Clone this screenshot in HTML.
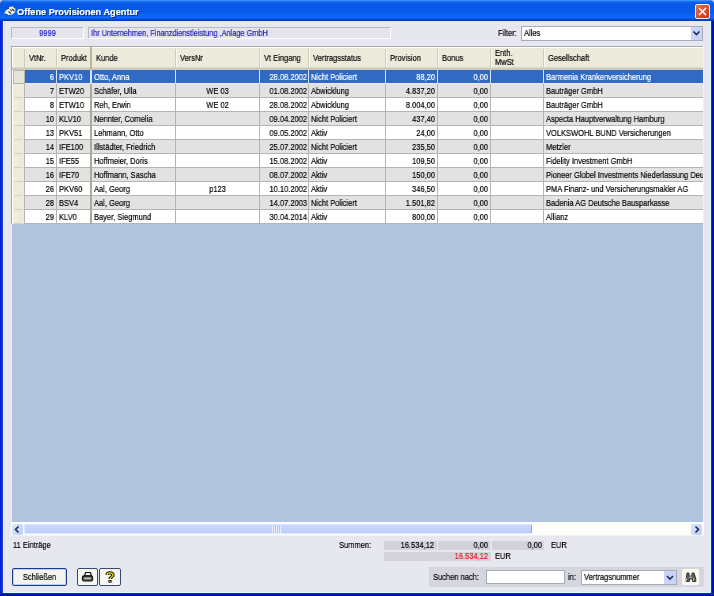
<!DOCTYPE html>
<html><head><meta charset="utf-8"><style>
*{box-sizing:border-box}
html,body{margin:0;padding:0;width:714px;height:596px;overflow:hidden;background:#b4c4ec}
body{position:relative;font-family:"Liberation Sans",sans-serif;font-size:9.5px;color:#000}
.a{position:absolute}
.t{position:absolute;white-space:nowrap;line-height:10px;transform:scaleX(0.79);will-change:transform;-webkit-text-stroke-width:.2px}
svg{position:absolute;overflow:visible}
</style></head><body>

<div class="a" style="left:0px;top:0px;width:714px;height:596px;border-radius:5px 5px 0 0;background:linear-gradient(90deg,#0020d8 0,#0a2ddb 2px,#1d3dcc 2px,#1d3dcc 3px,#0a2ddb 3px,#0a2ddb 711px,#3050c0 711px,#0010a0 712px)"></div>
<div class="a" style="left:0px;top:593px;width:714px;height:3px;background:linear-gradient(180deg,#1a3aa8 0,#0828a8 1px,#001090 2px)"></div>
<div class="a" style="left:0px;top:0px;width:714px;height:21px;border-radius:5px 5px 0 0;background:linear-gradient(180deg,#4b9cff 0,#2b80f6 1px,#0c62ec 2px,#0858e8 4px,#0858ea 11px,#0a64f4 15px,#0a6afc 18px,#0454dc 19px,#003cbc 20px,#003cbc 21px)"></div>
<div class="a" style="left:3px;top:21px;width:708px;height:572px;background:#e7e7f0;border-left:1px solid #dff8ff;border-right:1px solid #e0fcff;border-bottom:1px solid #e0fcff"></div>
<div class="t" style="left:17px;top:6px;color:#fff;font-weight:bold;font-size:9.2px;line-height:12px;transform:none;text-shadow:1px 1px 0 #0a1e8c">Offene Provisionen Agentur</div>
<svg style="left:3px;top:5px" width="14" height="11"><path d="M1.5 7.5L4.5 3.5Q7 1 10 1.5L12.5 4L12 7.5L9 9.5L5 10L2 9.5Z" fill="#eef2ea"/><path d="M2 9L4.5 10M5.5 6.5L8 8.5M9 4L11.5 6M4 4L6 3" stroke="#1a2860" stroke-width="1.1"/><path d="M7 4.5L9 6" stroke="#705838" stroke-width="1.2"/><path d="M10.5 2L12 3" stroke="#405838" stroke-width="1"/></svg>
<div class="a" style="left:695px;top:4px;width:15px;height:15px;border:1px solid #f4f0f8;border-radius:2px;background:linear-gradient(135deg,#e8704a 0,#d9502a 50%,#c43a18 100%)"></div>
<svg style="left:695px;top:4px" width="15" height="15"><path d="M4 4L11 11M11 4L4 11" stroke="#fff" stroke-width="1.7"/></svg>
<div class="a" style="left:11px;top:27px;width:73px;height:12px;background:#e5e4ec;border-top:1px solid #b9b8bf;border-left:1px solid #b9b8bf;border-bottom:1px solid #fff;border-right:1px solid #fff"></div>
<div class="t" style="left:11px;top:27.5px;width:73px;text-align:center;transform-origin:50% 50%;color:#1c1cc0;">9999</div>
<div class="a" style="left:88px;top:27px;width:303px;height:12px;background:#e5e4ec;border-top:1px solid #b9b8bf;border-left:1px solid #b9b8bf;border-bottom:1px solid #fff;border-right:1px solid #fff"></div>
<div class="t" style="left:91px;top:27.5px;transform-origin:0 50%;color:#1c1cc0;transform:scaleX(0.775)">Ihr Unternehmen, Finanzdienstleistung ,Anlage GmbH</div>
<div class="t" style="left:498px;top:28px;transform-origin:0 50%;">Filter:</div>
<div class="a" style="left:521px;top:26px;width:182px;height:15px;background:#fff;border:1px solid #a5acb5"></div>
<div class="t" style="left:524px;top:28px;transform-origin:0 50%;">Alles</div>
<div class="a" style="left:691px;top:27px;width:11px;height:13px;background:#c8d4f8;border-radius:1px"></div>
<svg style="left:691px;top:27px" width="11" height="13"><path d="M2.5 4.5L5.5 7.5L8.5 4.5" stroke="#1c2a5a" stroke-width="1.6" fill="none"/></svg>
<div class="a" style="left:11px;top:46px;width:693px;height:490px;background:#b0c4de;overflow:hidden">
<div class="a" style="left:0px;top:0px;width:1px;height:490px;background:#e8ecf8"></div>
<div class="a" style="left:0px;top:0px;width:692px;height:24px;background:linear-gradient(180deg,#a8a8a8 0,#a8a8a8 1px,#ffffff 1px,#ffffff 2px,#ebeadb 2px,#ebeadb 21px,#e2dec7 21px,#d6d2c2 22px,#cbc7b8 23px)"></div>
<div class="a" style="left:0px;top:0px;width:1px;height:178px;background:#a8a8a8"></div>
<div class="a" style="left:1px;top:1px;width:1px;height:20px;background:#ffffff"></div>
<div class="a" style="left:13px;top:3px;width:1px;height:18px;background:#cfcdbd"></div>
<div class="a" style="left:45px;top:3px;width:1px;height:18px;background:#cfcdbd"></div>
<div class="a" style="left:46px;top:3px;width:1px;height:18px;background:#f8f8f2"></div>
<div class="t" style="left:18px;top:6.5px;transform-origin:0 50%;">VtNr.</div>
<div class="a" style="left:79px;top:1px;width:2px;height:23px;background:#c0b49c"></div>
<div class="t" style="left:50px;top:6.5px;transform-origin:0 50%;">Produkt</div>
<div class="a" style="left:164px;top:3px;width:1px;height:18px;background:#cfcdbd"></div>
<div class="a" style="left:165px;top:3px;width:1px;height:18px;background:#f8f8f2"></div>
<div class="t" style="left:85px;top:6.5px;transform-origin:0 50%;">Kunde</div>
<div class="a" style="left:248px;top:3px;width:1px;height:18px;background:#cfcdbd"></div>
<div class="a" style="left:249px;top:3px;width:1px;height:18px;background:#f8f8f2"></div>
<div class="t" style="left:169px;top:6.5px;transform-origin:0 50%;">VersNr</div>
<div class="a" style="left:297px;top:3px;width:1px;height:18px;background:#cfcdbd"></div>
<div class="a" style="left:298px;top:3px;width:1px;height:18px;background:#f8f8f2"></div>
<div class="t" style="left:253px;top:6.5px;transform-origin:0 50%;">Vt Eingang</div>
<div class="a" style="left:374px;top:3px;width:1px;height:18px;background:#cfcdbd"></div>
<div class="a" style="left:375px;top:3px;width:1px;height:18px;background:#f8f8f2"></div>
<div class="t" style="left:302px;top:6.5px;transform-origin:0 50%;">Vertragsstatus</div>
<div class="a" style="left:426px;top:3px;width:1px;height:18px;background:#cfcdbd"></div>
<div class="a" style="left:427px;top:3px;width:1px;height:18px;background:#f8f8f2"></div>
<div class="t" style="left:379px;top:6.5px;transform-origin:0 50%;">Provision</div>
<div class="a" style="left:479px;top:3px;width:1px;height:18px;background:#cfcdbd"></div>
<div class="a" style="left:480px;top:3px;width:1px;height:18px;background:#f8f8f2"></div>
<div class="t" style="left:431px;top:6.5px;transform-origin:0 50%;">Bonus</div>
<div class="a" style="left:532px;top:3px;width:1px;height:18px;background:#cfcdbd"></div>
<div class="a" style="left:533px;top:3px;width:1px;height:18px;background:#f8f8f2"></div>
<div class="t" style="left:484px;top:3px;transform-origin:0 50%;line-height:8px">Enth.</div>
<div class="t" style="left:484px;top:12px;transform-origin:0 50%;line-height:8px">MwSt</div>
<div class="t" style="left:537px;top:6.5px;transform-origin:0 50%;">Gesellschaft</div>
<div class="a" style="left:1px;top:24px;width:13px;height:14px;background:#ecebdd"></div>
<div class="a" style="left:2px;top:24px;width:12px;height:14px;background:#e4e4da;border:1px solid #b8b6a6;border-right:none"></div>
<div class="a" style="left:1px;top:24px;width:1px;height:14px;background:#ffffff"></div>
<div class="a" style="left:13px;top:24px;width:1px;height:14px;background:#b8b6a8"></div>
<div class="a" style="left:14px;top:24px;width:735px;height:14px;background:#316ac5"></div>
<div class="a" style="left:14px;top:37px;width:735px;height:1px;background:#e8eefa"></div>
<div class="a" style="left:45px;top:24px;width:1px;height:14px;background:#d8e4f8"></div>
<div class="t" style="left:14px;top:25.5px;width:29px;text-align:right;transform-origin:100% 50%;color:#fff;">6</div>
<div class="a" style="left:79px;top:24px;width:2px;height:14px;background:#d8e4f8"></div>
<div class="t" style="left:48px;top:25.5px;transform-origin:0 50%;color:#fff;">PKV10</div>
<div class="a" style="left:164px;top:24px;width:1px;height:14px;background:#d8e4f8"></div>
<div class="t" style="left:83px;top:25.5px;transform-origin:0 50%;color:#fff;">Otto, Anna</div>
<div class="a" style="left:248px;top:24px;width:1px;height:14px;background:#d8e4f8"></div>
<div class="a" style="left:297px;top:24px;width:1px;height:14px;background:#d8e4f8"></div>
<div class="t" style="left:249px;top:25.5px;width:45px;text-align:right;transform-origin:100% 50%;color:#fff;">28.08.2002</div>
<div class="a" style="left:374px;top:24px;width:1px;height:14px;background:#d8e4f8"></div>
<div class="t" style="left:300px;top:25.5px;transform-origin:0 50%;color:#fff;">Nicht Policiert</div>
<div class="a" style="left:426px;top:24px;width:1px;height:14px;background:#d8e4f8"></div>
<div class="t" style="left:375px;top:25.5px;width:49px;text-align:right;transform-origin:100% 50%;color:#fff;">88,20</div>
<div class="a" style="left:479px;top:24px;width:1px;height:14px;background:#d8e4f8"></div>
<div class="t" style="left:427px;top:25.5px;width:50px;text-align:right;transform-origin:100% 50%;color:#fff;">0,00</div>
<div class="a" style="left:532px;top:24px;width:1px;height:14px;background:#d8e4f8"></div>
<div class="t" style="left:535px;top:25.5px;transform-origin:0 50%;color:#fff;">Barmenia Krankenversicherung</div>
<div class="a" style="left:1px;top:38px;width:13px;height:14px;background:#edecdd"></div>
<div class="a" style="left:3px;top:51px;width:9px;height:1px;background:#d2d0c0"></div>
<div class="a" style="left:1px;top:38px;width:1px;height:14px;background:#ffffff"></div>
<div class="a" style="left:13px;top:38px;width:1px;height:14px;background:#b8b6a8"></div>
<div class="a" style="left:14px;top:38px;width:735px;height:14px;background:#e2e2e2"></div>
<div class="a" style="left:14px;top:51px;width:735px;height:1px;background:#b4b4b4"></div>
<div class="a" style="left:45px;top:38px;width:1px;height:14px;background:#b4b4b4"></div>
<div class="t" style="left:14px;top:39.5px;width:29px;text-align:right;transform-origin:100% 50%;">7</div>
<div class="a" style="left:79px;top:38px;width:2px;height:14px;background:#b0a898"></div>
<div class="t" style="left:48px;top:39.5px;transform-origin:0 50%;">ETW20</div>
<div class="a" style="left:164px;top:38px;width:1px;height:14px;background:#b4b4b4"></div>
<div class="t" style="left:83px;top:39.5px;transform-origin:0 50%;">Schäfer, Ulla</div>
<div class="a" style="left:248px;top:38px;width:1px;height:14px;background:#b4b4b4"></div>
<div class="t" style="left:165px;top:39.5px;width:83px;text-align:center;transform-origin:50% 50%;">WE 03</div>
<div class="a" style="left:297px;top:38px;width:1px;height:14px;background:#b4b4b4"></div>
<div class="t" style="left:249px;top:39.5px;width:45px;text-align:right;transform-origin:100% 50%;">01.08.2002</div>
<div class="a" style="left:374px;top:38px;width:1px;height:14px;background:#b4b4b4"></div>
<div class="t" style="left:300px;top:39.5px;transform-origin:0 50%;">Abwicklung</div>
<div class="a" style="left:426px;top:38px;width:1px;height:14px;background:#b4b4b4"></div>
<div class="t" style="left:375px;top:39.5px;width:49px;text-align:right;transform-origin:100% 50%;">4.837,20</div>
<div class="a" style="left:479px;top:38px;width:1px;height:14px;background:#b4b4b4"></div>
<div class="t" style="left:427px;top:39.5px;width:50px;text-align:right;transform-origin:100% 50%;">0,00</div>
<div class="a" style="left:532px;top:38px;width:1px;height:14px;background:#b4b4b4"></div>
<div class="t" style="left:535px;top:39.5px;transform-origin:0 50%;">Bauträger GmbH</div>
<div class="a" style="left:1px;top:52px;width:13px;height:14px;background:#edecdd"></div>
<div class="a" style="left:3px;top:65px;width:9px;height:1px;background:#d2d0c0"></div>
<div class="a" style="left:1px;top:52px;width:1px;height:14px;background:#ffffff"></div>
<div class="a" style="left:13px;top:52px;width:1px;height:14px;background:#b8b6a8"></div>
<div class="a" style="left:14px;top:52px;width:735px;height:14px;background:#ffffff"></div>
<div class="a" style="left:14px;top:65px;width:735px;height:1px;background:#b4b4b4"></div>
<div class="a" style="left:45px;top:52px;width:1px;height:14px;background:#b4b4b4"></div>
<div class="t" style="left:14px;top:53.5px;width:29px;text-align:right;transform-origin:100% 50%;">8</div>
<div class="a" style="left:79px;top:52px;width:2px;height:14px;background:#b0a898"></div>
<div class="t" style="left:48px;top:53.5px;transform-origin:0 50%;">ETW10</div>
<div class="a" style="left:164px;top:52px;width:1px;height:14px;background:#b4b4b4"></div>
<div class="t" style="left:83px;top:53.5px;transform-origin:0 50%;">Reh, Erwin</div>
<div class="a" style="left:248px;top:52px;width:1px;height:14px;background:#b4b4b4"></div>
<div class="t" style="left:165px;top:53.5px;width:83px;text-align:center;transform-origin:50% 50%;">WE 02</div>
<div class="a" style="left:297px;top:52px;width:1px;height:14px;background:#b4b4b4"></div>
<div class="t" style="left:249px;top:53.5px;width:45px;text-align:right;transform-origin:100% 50%;">28.08.2002</div>
<div class="a" style="left:374px;top:52px;width:1px;height:14px;background:#b4b4b4"></div>
<div class="t" style="left:300px;top:53.5px;transform-origin:0 50%;">Abwicklung</div>
<div class="a" style="left:426px;top:52px;width:1px;height:14px;background:#b4b4b4"></div>
<div class="t" style="left:375px;top:53.5px;width:49px;text-align:right;transform-origin:100% 50%;">8.004,00</div>
<div class="a" style="left:479px;top:52px;width:1px;height:14px;background:#b4b4b4"></div>
<div class="t" style="left:427px;top:53.5px;width:50px;text-align:right;transform-origin:100% 50%;">0,00</div>
<div class="a" style="left:532px;top:52px;width:1px;height:14px;background:#b4b4b4"></div>
<div class="t" style="left:535px;top:53.5px;transform-origin:0 50%;">Bauträger GmbH</div>
<div class="a" style="left:1px;top:66px;width:13px;height:14px;background:#edecdd"></div>
<div class="a" style="left:3px;top:79px;width:9px;height:1px;background:#d2d0c0"></div>
<div class="a" style="left:1px;top:66px;width:1px;height:14px;background:#ffffff"></div>
<div class="a" style="left:13px;top:66px;width:1px;height:14px;background:#b8b6a8"></div>
<div class="a" style="left:14px;top:66px;width:735px;height:14px;background:#e2e2e2"></div>
<div class="a" style="left:14px;top:79px;width:735px;height:1px;background:#b4b4b4"></div>
<div class="a" style="left:45px;top:66px;width:1px;height:14px;background:#b4b4b4"></div>
<div class="t" style="left:14px;top:67.5px;width:29px;text-align:right;transform-origin:100% 50%;">10</div>
<div class="a" style="left:79px;top:66px;width:2px;height:14px;background:#b0a898"></div>
<div class="t" style="left:48px;top:67.5px;transform-origin:0 50%;">KLV10</div>
<div class="a" style="left:164px;top:66px;width:1px;height:14px;background:#b4b4b4"></div>
<div class="t" style="left:83px;top:67.5px;transform-origin:0 50%;">Nennter, Cornelia</div>
<div class="a" style="left:248px;top:66px;width:1px;height:14px;background:#b4b4b4"></div>
<div class="a" style="left:297px;top:66px;width:1px;height:14px;background:#b4b4b4"></div>
<div class="t" style="left:249px;top:67.5px;width:45px;text-align:right;transform-origin:100% 50%;">09.04.2002</div>
<div class="a" style="left:374px;top:66px;width:1px;height:14px;background:#b4b4b4"></div>
<div class="t" style="left:300px;top:67.5px;transform-origin:0 50%;">Nicht Policiert</div>
<div class="a" style="left:426px;top:66px;width:1px;height:14px;background:#b4b4b4"></div>
<div class="t" style="left:375px;top:67.5px;width:49px;text-align:right;transform-origin:100% 50%;">437,40</div>
<div class="a" style="left:479px;top:66px;width:1px;height:14px;background:#b4b4b4"></div>
<div class="t" style="left:427px;top:67.5px;width:50px;text-align:right;transform-origin:100% 50%;">0,00</div>
<div class="a" style="left:532px;top:66px;width:1px;height:14px;background:#b4b4b4"></div>
<div class="t" style="left:535px;top:67.5px;transform-origin:0 50%;">Aspecta Hauptverwaltung Hamburg</div>
<div class="a" style="left:1px;top:80px;width:13px;height:14px;background:#edecdd"></div>
<div class="a" style="left:3px;top:93px;width:9px;height:1px;background:#d2d0c0"></div>
<div class="a" style="left:1px;top:80px;width:1px;height:14px;background:#ffffff"></div>
<div class="a" style="left:13px;top:80px;width:1px;height:14px;background:#b8b6a8"></div>
<div class="a" style="left:14px;top:80px;width:735px;height:14px;background:#ffffff"></div>
<div class="a" style="left:14px;top:93px;width:735px;height:1px;background:#b4b4b4"></div>
<div class="a" style="left:45px;top:80px;width:1px;height:14px;background:#b4b4b4"></div>
<div class="t" style="left:14px;top:81.5px;width:29px;text-align:right;transform-origin:100% 50%;">13</div>
<div class="a" style="left:79px;top:80px;width:2px;height:14px;background:#b0a898"></div>
<div class="t" style="left:48px;top:81.5px;transform-origin:0 50%;">PKV51</div>
<div class="a" style="left:164px;top:80px;width:1px;height:14px;background:#b4b4b4"></div>
<div class="t" style="left:83px;top:81.5px;transform-origin:0 50%;">Lehmann, Otto</div>
<div class="a" style="left:248px;top:80px;width:1px;height:14px;background:#b4b4b4"></div>
<div class="a" style="left:297px;top:80px;width:1px;height:14px;background:#b4b4b4"></div>
<div class="t" style="left:249px;top:81.5px;width:45px;text-align:right;transform-origin:100% 50%;">09.05.2002</div>
<div class="a" style="left:374px;top:80px;width:1px;height:14px;background:#b4b4b4"></div>
<div class="t" style="left:300px;top:81.5px;transform-origin:0 50%;">Aktiv</div>
<div class="a" style="left:426px;top:80px;width:1px;height:14px;background:#b4b4b4"></div>
<div class="t" style="left:375px;top:81.5px;width:49px;text-align:right;transform-origin:100% 50%;">24,00</div>
<div class="a" style="left:479px;top:80px;width:1px;height:14px;background:#b4b4b4"></div>
<div class="t" style="left:427px;top:81.5px;width:50px;text-align:right;transform-origin:100% 50%;">0,00</div>
<div class="a" style="left:532px;top:80px;width:1px;height:14px;background:#b4b4b4"></div>
<div class="t" style="left:535px;top:81.5px;transform-origin:0 50%;">VOLKSWOHL BUND Versicherungen</div>
<div class="a" style="left:1px;top:94px;width:13px;height:14px;background:#edecdd"></div>
<div class="a" style="left:3px;top:107px;width:9px;height:1px;background:#d2d0c0"></div>
<div class="a" style="left:1px;top:94px;width:1px;height:14px;background:#ffffff"></div>
<div class="a" style="left:13px;top:94px;width:1px;height:14px;background:#b8b6a8"></div>
<div class="a" style="left:14px;top:94px;width:735px;height:14px;background:#e2e2e2"></div>
<div class="a" style="left:14px;top:107px;width:735px;height:1px;background:#b4b4b4"></div>
<div class="a" style="left:45px;top:94px;width:1px;height:14px;background:#b4b4b4"></div>
<div class="t" style="left:14px;top:95.5px;width:29px;text-align:right;transform-origin:100% 50%;">14</div>
<div class="a" style="left:79px;top:94px;width:2px;height:14px;background:#b0a898"></div>
<div class="t" style="left:48px;top:95.5px;transform-origin:0 50%;">IFE100</div>
<div class="a" style="left:164px;top:94px;width:1px;height:14px;background:#b4b4b4"></div>
<div class="t" style="left:83px;top:95.5px;transform-origin:0 50%;">Illstädter, Friedrich</div>
<div class="a" style="left:248px;top:94px;width:1px;height:14px;background:#b4b4b4"></div>
<div class="a" style="left:297px;top:94px;width:1px;height:14px;background:#b4b4b4"></div>
<div class="t" style="left:249px;top:95.5px;width:45px;text-align:right;transform-origin:100% 50%;">25.07.2002</div>
<div class="a" style="left:374px;top:94px;width:1px;height:14px;background:#b4b4b4"></div>
<div class="t" style="left:300px;top:95.5px;transform-origin:0 50%;">Nicht Policiert</div>
<div class="a" style="left:426px;top:94px;width:1px;height:14px;background:#b4b4b4"></div>
<div class="t" style="left:375px;top:95.5px;width:49px;text-align:right;transform-origin:100% 50%;">235,50</div>
<div class="a" style="left:479px;top:94px;width:1px;height:14px;background:#b4b4b4"></div>
<div class="t" style="left:427px;top:95.5px;width:50px;text-align:right;transform-origin:100% 50%;">0,00</div>
<div class="a" style="left:532px;top:94px;width:1px;height:14px;background:#b4b4b4"></div>
<div class="t" style="left:535px;top:95.5px;transform-origin:0 50%;">Metzler</div>
<div class="a" style="left:1px;top:108px;width:13px;height:14px;background:#edecdd"></div>
<div class="a" style="left:3px;top:121px;width:9px;height:1px;background:#d2d0c0"></div>
<div class="a" style="left:1px;top:108px;width:1px;height:14px;background:#ffffff"></div>
<div class="a" style="left:13px;top:108px;width:1px;height:14px;background:#b8b6a8"></div>
<div class="a" style="left:14px;top:108px;width:735px;height:14px;background:#ffffff"></div>
<div class="a" style="left:14px;top:121px;width:735px;height:1px;background:#b4b4b4"></div>
<div class="a" style="left:45px;top:108px;width:1px;height:14px;background:#b4b4b4"></div>
<div class="t" style="left:14px;top:109.5px;width:29px;text-align:right;transform-origin:100% 50%;">15</div>
<div class="a" style="left:79px;top:108px;width:2px;height:14px;background:#b0a898"></div>
<div class="t" style="left:48px;top:109.5px;transform-origin:0 50%;">IFE55</div>
<div class="a" style="left:164px;top:108px;width:1px;height:14px;background:#b4b4b4"></div>
<div class="t" style="left:83px;top:109.5px;transform-origin:0 50%;">Hoffmeier, Doris</div>
<div class="a" style="left:248px;top:108px;width:1px;height:14px;background:#b4b4b4"></div>
<div class="a" style="left:297px;top:108px;width:1px;height:14px;background:#b4b4b4"></div>
<div class="t" style="left:249px;top:109.5px;width:45px;text-align:right;transform-origin:100% 50%;">15.08.2002</div>
<div class="a" style="left:374px;top:108px;width:1px;height:14px;background:#b4b4b4"></div>
<div class="t" style="left:300px;top:109.5px;transform-origin:0 50%;">Aktiv</div>
<div class="a" style="left:426px;top:108px;width:1px;height:14px;background:#b4b4b4"></div>
<div class="t" style="left:375px;top:109.5px;width:49px;text-align:right;transform-origin:100% 50%;">109,50</div>
<div class="a" style="left:479px;top:108px;width:1px;height:14px;background:#b4b4b4"></div>
<div class="t" style="left:427px;top:109.5px;width:50px;text-align:right;transform-origin:100% 50%;">0,00</div>
<div class="a" style="left:532px;top:108px;width:1px;height:14px;background:#b4b4b4"></div>
<div class="t" style="left:535px;top:109.5px;transform-origin:0 50%;">Fidelity Investment GmbH</div>
<div class="a" style="left:1px;top:122px;width:13px;height:14px;background:#edecdd"></div>
<div class="a" style="left:3px;top:135px;width:9px;height:1px;background:#d2d0c0"></div>
<div class="a" style="left:1px;top:122px;width:1px;height:14px;background:#ffffff"></div>
<div class="a" style="left:13px;top:122px;width:1px;height:14px;background:#b8b6a8"></div>
<div class="a" style="left:14px;top:122px;width:735px;height:14px;background:#e2e2e2"></div>
<div class="a" style="left:14px;top:135px;width:735px;height:1px;background:#b4b4b4"></div>
<div class="a" style="left:45px;top:122px;width:1px;height:14px;background:#b4b4b4"></div>
<div class="t" style="left:14px;top:123.5px;width:29px;text-align:right;transform-origin:100% 50%;">16</div>
<div class="a" style="left:79px;top:122px;width:2px;height:14px;background:#b0a898"></div>
<div class="t" style="left:48px;top:123.5px;transform-origin:0 50%;">IFE70</div>
<div class="a" style="left:164px;top:122px;width:1px;height:14px;background:#b4b4b4"></div>
<div class="t" style="left:83px;top:123.5px;transform-origin:0 50%;">Hoffmann, Sascha</div>
<div class="a" style="left:248px;top:122px;width:1px;height:14px;background:#b4b4b4"></div>
<div class="a" style="left:297px;top:122px;width:1px;height:14px;background:#b4b4b4"></div>
<div class="t" style="left:249px;top:123.5px;width:45px;text-align:right;transform-origin:100% 50%;">08.07.2002</div>
<div class="a" style="left:374px;top:122px;width:1px;height:14px;background:#b4b4b4"></div>
<div class="t" style="left:300px;top:123.5px;transform-origin:0 50%;">Aktiv</div>
<div class="a" style="left:426px;top:122px;width:1px;height:14px;background:#b4b4b4"></div>
<div class="t" style="left:375px;top:123.5px;width:49px;text-align:right;transform-origin:100% 50%;">150,00</div>
<div class="a" style="left:479px;top:122px;width:1px;height:14px;background:#b4b4b4"></div>
<div class="t" style="left:427px;top:123.5px;width:50px;text-align:right;transform-origin:100% 50%;">0,00</div>
<div class="a" style="left:532px;top:122px;width:1px;height:14px;background:#b4b4b4"></div>
<div class="t" style="left:535px;top:123.5px;transform-origin:0 50%;">Pioneer Globel Investments Niederlassung Deutschland</div>
<div class="a" style="left:1px;top:136px;width:13px;height:14px;background:#edecdd"></div>
<div class="a" style="left:3px;top:149px;width:9px;height:1px;background:#d2d0c0"></div>
<div class="a" style="left:1px;top:136px;width:1px;height:14px;background:#ffffff"></div>
<div class="a" style="left:13px;top:136px;width:1px;height:14px;background:#b8b6a8"></div>
<div class="a" style="left:14px;top:136px;width:735px;height:14px;background:#ffffff"></div>
<div class="a" style="left:14px;top:149px;width:735px;height:1px;background:#b4b4b4"></div>
<div class="a" style="left:45px;top:136px;width:1px;height:14px;background:#b4b4b4"></div>
<div class="t" style="left:14px;top:137.5px;width:29px;text-align:right;transform-origin:100% 50%;">26</div>
<div class="a" style="left:79px;top:136px;width:2px;height:14px;background:#b0a898"></div>
<div class="t" style="left:48px;top:137.5px;transform-origin:0 50%;">PKV60</div>
<div class="a" style="left:164px;top:136px;width:1px;height:14px;background:#b4b4b4"></div>
<div class="t" style="left:83px;top:137.5px;transform-origin:0 50%;">Aal, Georg</div>
<div class="a" style="left:248px;top:136px;width:1px;height:14px;background:#b4b4b4"></div>
<div class="t" style="left:165px;top:137.5px;width:83px;text-align:center;transform-origin:50% 50%;">p123</div>
<div class="a" style="left:297px;top:136px;width:1px;height:14px;background:#b4b4b4"></div>
<div class="t" style="left:249px;top:137.5px;width:45px;text-align:right;transform-origin:100% 50%;">10.10.2002</div>
<div class="a" style="left:374px;top:136px;width:1px;height:14px;background:#b4b4b4"></div>
<div class="t" style="left:300px;top:137.5px;transform-origin:0 50%;">Aktiv</div>
<div class="a" style="left:426px;top:136px;width:1px;height:14px;background:#b4b4b4"></div>
<div class="t" style="left:375px;top:137.5px;width:49px;text-align:right;transform-origin:100% 50%;">346,50</div>
<div class="a" style="left:479px;top:136px;width:1px;height:14px;background:#b4b4b4"></div>
<div class="t" style="left:427px;top:137.5px;width:50px;text-align:right;transform-origin:100% 50%;">0,00</div>
<div class="a" style="left:532px;top:136px;width:1px;height:14px;background:#b4b4b4"></div>
<div class="t" style="left:535px;top:137.5px;transform-origin:0 50%;">PMA Finanz- und Versicherungsmakler AG</div>
<div class="a" style="left:1px;top:150px;width:13px;height:14px;background:#edecdd"></div>
<div class="a" style="left:3px;top:163px;width:9px;height:1px;background:#d2d0c0"></div>
<div class="a" style="left:1px;top:150px;width:1px;height:14px;background:#ffffff"></div>
<div class="a" style="left:13px;top:150px;width:1px;height:14px;background:#b8b6a8"></div>
<div class="a" style="left:14px;top:150px;width:735px;height:14px;background:#e2e2e2"></div>
<div class="a" style="left:14px;top:163px;width:735px;height:1px;background:#b4b4b4"></div>
<div class="a" style="left:45px;top:150px;width:1px;height:14px;background:#b4b4b4"></div>
<div class="t" style="left:14px;top:151.5px;width:29px;text-align:right;transform-origin:100% 50%;">28</div>
<div class="a" style="left:79px;top:150px;width:2px;height:14px;background:#b0a898"></div>
<div class="t" style="left:48px;top:151.5px;transform-origin:0 50%;">BSV4</div>
<div class="a" style="left:164px;top:150px;width:1px;height:14px;background:#b4b4b4"></div>
<div class="t" style="left:83px;top:151.5px;transform-origin:0 50%;">Aal, Georg</div>
<div class="a" style="left:248px;top:150px;width:1px;height:14px;background:#b4b4b4"></div>
<div class="a" style="left:297px;top:150px;width:1px;height:14px;background:#b4b4b4"></div>
<div class="t" style="left:249px;top:151.5px;width:45px;text-align:right;transform-origin:100% 50%;">14.07.2003</div>
<div class="a" style="left:374px;top:150px;width:1px;height:14px;background:#b4b4b4"></div>
<div class="t" style="left:300px;top:151.5px;transform-origin:0 50%;">Nicht Policiert</div>
<div class="a" style="left:426px;top:150px;width:1px;height:14px;background:#b4b4b4"></div>
<div class="t" style="left:375px;top:151.5px;width:49px;text-align:right;transform-origin:100% 50%;">1.501,82</div>
<div class="a" style="left:479px;top:150px;width:1px;height:14px;background:#b4b4b4"></div>
<div class="t" style="left:427px;top:151.5px;width:50px;text-align:right;transform-origin:100% 50%;">0,00</div>
<div class="a" style="left:532px;top:150px;width:1px;height:14px;background:#b4b4b4"></div>
<div class="t" style="left:535px;top:151.5px;transform-origin:0 50%;">Badenia AG Deutsche Bausparkasse</div>
<div class="a" style="left:1px;top:164px;width:13px;height:14px;background:#edecdd"></div>
<div class="a" style="left:3px;top:177px;width:9px;height:1px;background:#d2d0c0"></div>
<div class="a" style="left:1px;top:164px;width:1px;height:14px;background:#ffffff"></div>
<div class="a" style="left:13px;top:164px;width:1px;height:14px;background:#b8b6a8"></div>
<div class="a" style="left:14px;top:164px;width:735px;height:14px;background:#ffffff"></div>
<div class="a" style="left:14px;top:177px;width:735px;height:1px;background:#b4b4b4"></div>
<div class="a" style="left:45px;top:164px;width:1px;height:14px;background:#b4b4b4"></div>
<div class="t" style="left:14px;top:165.5px;width:29px;text-align:right;transform-origin:100% 50%;">29</div>
<div class="a" style="left:79px;top:164px;width:2px;height:14px;background:#b0a898"></div>
<div class="t" style="left:48px;top:165.5px;transform-origin:0 50%;">KLV0</div>
<div class="a" style="left:164px;top:164px;width:1px;height:14px;background:#b4b4b4"></div>
<div class="t" style="left:83px;top:165.5px;transform-origin:0 50%;">Bayer, Siegmund</div>
<div class="a" style="left:248px;top:164px;width:1px;height:14px;background:#b4b4b4"></div>
<div class="a" style="left:297px;top:164px;width:1px;height:14px;background:#b4b4b4"></div>
<div class="t" style="left:249px;top:165.5px;width:45px;text-align:right;transform-origin:100% 50%;">30.04.2014</div>
<div class="a" style="left:374px;top:164px;width:1px;height:14px;background:#b4b4b4"></div>
<div class="t" style="left:300px;top:165.5px;transform-origin:0 50%;">Aktiv</div>
<div class="a" style="left:426px;top:164px;width:1px;height:14px;background:#b4b4b4"></div>
<div class="t" style="left:375px;top:165.5px;width:49px;text-align:right;transform-origin:100% 50%;">800,00</div>
<div class="a" style="left:479px;top:164px;width:1px;height:14px;background:#b4b4b4"></div>
<div class="t" style="left:427px;top:165.5px;width:50px;text-align:right;transform-origin:100% 50%;">0,00</div>
<div class="a" style="left:532px;top:164px;width:1px;height:14px;background:#b4b4b4"></div>
<div class="t" style="left:535px;top:165.5px;transform-origin:0 50%;">Allianz</div>
<div class="a" style="left:692px;top:0px;width:1px;height:490px;background:#eef2ff"></div>
</div>
<div class="a" style="left:11px;top:522px;width:693px;height:14px;background:#fefefb;border-top:1px solid #ffffff;border-left:1px solid #ffffff;border-bottom:1px solid #f0f0f8"></div>
<div class="a" style="left:12px;top:524px;width:11px;height:11px;background:linear-gradient(135deg,#dce6fd,#bccdf6);border-radius:2px"></div>
<svg style="left:12px;top:524px" width="11" height="11"><path d="M6.5 2.5L3.5 5.5L6.5 8.5" stroke="#1c2a5a" stroke-width="1.6" fill="none"/></svg>
<div class="a" style="left:24px;top:524px;width:508px;height:10px;background:linear-gradient(180deg,#c9d8fd,#bccffc);border-radius:2px;border:1px solid #dde6fc;border-right:1px solid #98a8cc"></div>
<div class="a" style="left:272px;top:526px;width:9px;height:7px;background:repeating-linear-gradient(90deg,#e8eeff 0,#e8eeff 1px,#b4c6f0 1px,#b4c6f0 2px)"></div>
<div class="a" style="left:691px;top:524px;width:11px;height:11px;background:linear-gradient(135deg,#dce6fd,#bccdf6);border-radius:2px"></div>
<svg style="left:691px;top:524px" width="11" height="11"><path d="M4.5 2.5L7.5 5.5L4.5 8.5" stroke="#1c2a5a" stroke-width="1.6" fill="none"/></svg>
<div class="t" style="left:13px;top:540.4px;transform-origin:0 50%;">11 Einträge</div>
<div class="t" style="left:339px;top:540.4px;transform-origin:0 50%;">Summen:</div>
<div class="a" style="left:384px;top:541px;width:53px;height:9px;background:#d4d3db"></div>
<div class="t" style="left:384px;top:540.4px;width:50px;text-align:right;transform-origin:100% 50%;">16.534,12</div>
<div class="a" style="left:438px;top:541px;width:52px;height:9px;background:#d4d3db"></div>
<div class="t" style="left:438px;top:540.4px;width:50px;text-align:right;transform-origin:100% 50%;">0,00</div>
<div class="a" style="left:492px;top:541px;width:52px;height:9px;background:#d4d3db"></div>
<div class="t" style="left:492px;top:540.4px;width:50px;text-align:right;transform-origin:100% 50%;">0,00</div>
<div class="t" style="left:551px;top:540.4px;transform-origin:0 50%;">EUR</div>
<div class="a" style="left:384px;top:552px;width:107px;height:9px;background:#d4d3db"></div>
<div class="t" style="left:384px;top:551.4px;width:104px;text-align:right;transform-origin:100% 50%;color:#e02020;">16.534,12</div>
<div class="t" style="left:495px;top:551.4px;transform-origin:0 50%;">EUR</div>
<div class="a" style="left:12px;top:568px;width:55px;height:18px;background:#f4f4ee;border:1px solid #1e3c8c;border-radius:2px;box-shadow:inset 0 0 0 1px #b8d0f8"></div>
<div class="t" style="left:12px;top:572px;width:55px;text-align:center;transform-origin:50% 50%;">Schließen</div>
<div class="a" style="left:77px;top:568px;width:21px;height:18px;background:#f6f6f2;border:1px solid #3a4a6e;border-radius:2px"></div>
<svg style="left:81px;top:571px" width="14" height="12"><path d="M4.5 1.5H9.5L10.5 5H3.5Z" fill="#e8e8e0" stroke="#101010" stroke-width="1.1"/><rect x="1.5" y="5" width="10" height="4.8" rx="1.4" fill="#707070" stroke="#101010" stroke-width="1.3"/><path d="M3.5 7.2H9.5" stroke="#d8d8c8" stroke-width="1"/></svg>
<div class="a" style="left:99px;top:568px;width:22px;height:18px;background:#f6f6f2;border:1px solid #3a4a6e;border-radius:2px"></div>
<svg style="left:104px;top:571px" width="12" height="12"><path d="M3 4C3 1.2 9 1 9 4C9 6 6 6 6 8" fill="none" stroke="#101010" stroke-width="3.2"/><path d="M3 4C3 1.2 9 1 9 4C9 6 6 6 6 8" fill="none" stroke="#e8e020" stroke-width="1.3"/><rect x="4.4" y="9" width="3.2" height="2.6" fill="#101010"/><rect x="5.4" y="9.8" width="1.2" height="1" fill="#e8e020"/></svg>
<div class="a" style="left:429px;top:567px;width:275px;height:20px;background:#d6d6de"></div>
<div class="t" style="left:433px;top:572px;transform-origin:0 50%;">Suchen nach:</div>
<div class="a" style="left:486px;top:570px;width:79px;height:14px;background:#fff;border:1px solid #a5acb5"></div>
<div class="t" style="left:568px;top:572px;transform-origin:0 50%;">in:</div>
<div class="a" style="left:581px;top:570px;width:96px;height:15px;background:#fff;border:1px solid #a5acb5"></div>
<div class="t" style="left:584px;top:572px;transform-origin:0 50%;">Vertragsnummer</div>
<div class="a" style="left:664px;top:571px;width:12px;height:13px;background:#c8d4f8;border-radius:1px"></div>
<svg style="left:664px;top:571px" width="12" height="13"><path d="M3 5L6 8L9 5" stroke="#1c2a5a" stroke-width="1.6" fill="none"/></svg>
<div class="a" style="left:682px;top:569px;width:17px;height:16px;background:#fafaf0;border-radius:2px"></div>
<svg style="left:684px;top:572px" width="13" height="11"><path d="M3 1h2v3h3v-3h2l1.8 5.5v3h-3.3v-2.5h-3v2.5h-3.3v-3z" fill="#606060" stroke="#303030" stroke-width="0.9"/><path d="M2.5 6.5v2M9.5 6.5v2" stroke="#d8d8d8" stroke-width="0.9"/><rect x="5.2" y="4.6" width="2.6" height="1.4" fill="#c0c0c0"/></svg>
</body></html>
